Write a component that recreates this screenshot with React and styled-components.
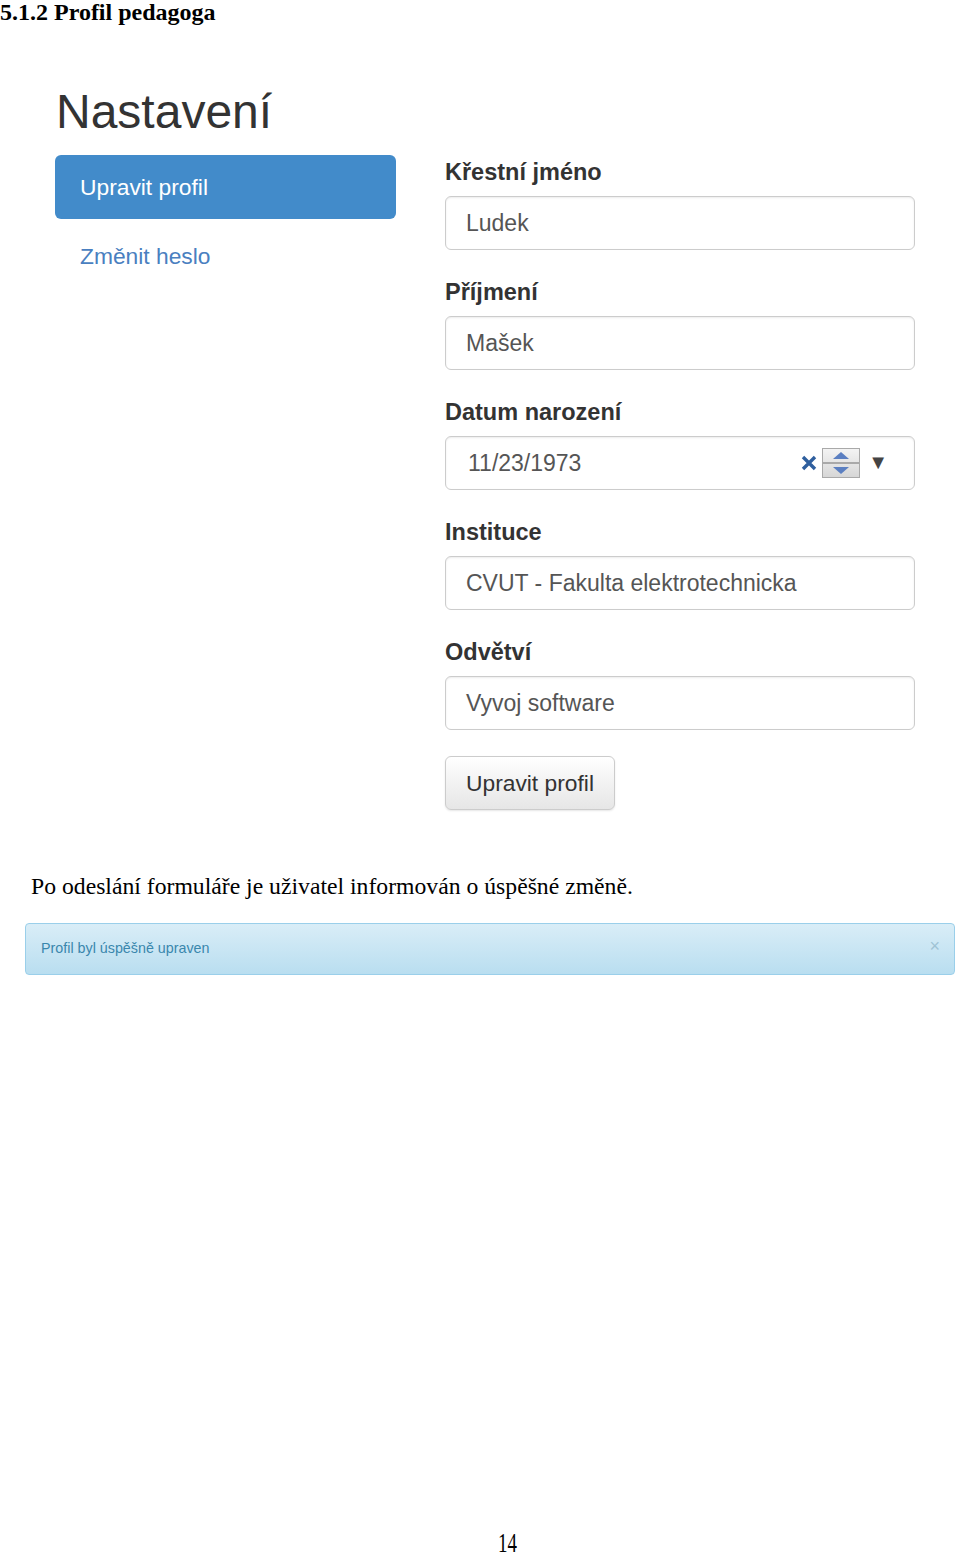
import React from "react";
import styled, { createGlobalStyle } from "styled-components";

const GlobalStyle = createGlobalStyle`
  html, body {
    margin: 0;
    padding: 0;
    background: #fff;
  }
  body {
    font-family: "Liberation Serif", "Times New Roman", serif;
  }
`;

const SpinnerIcon = () => (
  <svg width="38" height="30" viewBox="0 0 38 30">
    <defs>
      <linearGradient id="spin" x1="0" y1="0" x2="0" y2="1">
        <stop offset="0" stopColor="#f4f4f4" />
        <stop offset="1" stopColor="#d6d6d6" />
      </linearGradient>
    </defs>
    <rect x="0.5" y="0.5" width="37" height="29" fill="url(#spin)" stroke="#a9a9a9" />
    <line x1="1" y1="15" x2="37" y2="15" stroke="#a9a9a9" strokeWidth="2" />
    <path d="M11 11 L19 4 L27 11 Z" fill="#5b7fc1" />
    <path d="M11 19 L19 26 L27 19 Z" fill="#5b7fc1" />
  </svg>
);

const ClearIcon = () => (
  <svg width="16" height="16" viewBox="0 0 16 16">
    <path d="M2 2 L14 14 M14 2 L2 14" stroke="#2f5f9e" strokeWidth="3.4" strokeLinecap="butt" />
  </svg>
);

const fields = [
  { label: "Křestní jméno", value: "Ludek" },
  { label: "Příjmení", value: "Mašek" },
  { label: "Datum narození", value: "11/23/1973", date: true },
  { label: "Instituce", value: "CVUT - Fakulta elektrotechnicka" },
  { label: "Odvětví", value: "Vyvoj software" },
];

const App = () => {
  return (
    <>
      <GlobalStyle />
      <Page>
        <Heading>5.1.2 Profil pedagoga</Heading>

        <Settings>
          <Title>Nastavení</Title>
          <SettingsRow>
            <SideNav>
              <NavItem active>Upravit profil</NavItem>
              <NavItem>Změnit heslo</NavItem>
            </SideNav>

            <Form>
              {fields.map((f) => (
                <Group key={f.label}>
                  <Label>{f.label}</Label>
                  <Input>
                    <InputText date={f.date}>{f.value}</InputText>
                    {f.date && (
                      <DateTools>
                        <ClearIcon />
                        <SpinnerIcon />
                        <Caret>▼</Caret>
                      </DateTools>
                    )}
                  </Input>
                </Group>
              ))}
              <Button>Upravit profil</Button>
            </Form>
          </SettingsRow>
        </Settings>

        <Paragraph>Po odeslání formuláře je uživatel informován o úspěšné změně.</Paragraph>

        <Alert>
          <AlertText>Profil byl úspěšně upraven</AlertText>
          <AlertClose>×</AlertClose>
        </Alert>

        <PageNumber>14</PageNumber>
      </Page>
    </>
  );
};

export default App;

const Page = styled.div`
  width: 960px;
  height: 1558px;
  display: flex;
  flex-direction: column;
  overflow: hidden;
`;

const Heading = styled.div`
  font-family: "Liberation Serif", "Times New Roman", serif;
  font-weight: bold;
  font-size: 24px;
  line-height: 24px;
  color: #000;
  margin: 0;
  white-space: nowrap;
`;

const Settings = styled.div`
  display: flex;
  flex-direction: column;
  padding: 0 45px 0 55px;
  margin-top: 60px;
  font-family: "Liberation Sans", Arial, sans-serif;
`;

const Title = styled.div`
  font-size: 48px;
  line-height: 56px;
  color: #333;
  padding-left: 1px;
  margin-bottom: 15px;
`;

const SettingsRow = styled.div`
  display: flex;
  gap: 49px;
`;

const SideNav = styled.div`
  width: 341px;
  display: flex;
  flex-direction: column;
  gap: 5px;
`;

const NavItem = styled.div`
  height: 64px;
  display: flex;
  align-items: center;
  padding-left: 25px;
  border-radius: 6px;
  font-size: 22.8px;
  color: ${(p) => (p.active ? "#fff" : "#4a7fc0")};
  background: ${(p) => (p.active ? "#428bca" : "transparent")};
`;

const Form = styled.div`
  width: 470px;
  display: flex;
  flex-direction: column;
  padding-top: 1px;
`;

const Group = styled.div`
  display: flex;
  flex-direction: column;
  margin-bottom: 26px;
`;

const Label = styled.div`
  font-size: 23.5px;
  font-weight: bold;
  line-height: 32px;
  color: #333;
  margin-bottom: 8px;
`;

const Input = styled.div`
  height: 54px;
  box-sizing: border-box;
  border: 1px solid #ccc;
  border-radius: 6px;
  box-shadow: inset 0 1px 2px rgba(0, 0, 0, 0.08);
  display: flex;
  align-items: center;
  padding: 0 18px 0 20px;
`;

const InputText = styled.div`
  flex: 1;
  font-size: 23px;
  color: #555;
  padding-left: ${(p) => (p.date ? "2px" : "0")};
`;

const DateTools = styled.div`
  display: flex;
  align-items: center;
  gap: 5px;
  margin-right: 8px;
`;

const Caret = styled.span`
  font-size: 20px;
  line-height: 20px;
  color: #444;
  margin-left: 3px;
  margin-bottom: 3px;
`;

const Button = styled.div`
  align-self: flex-start;
  height: 54px;
  box-sizing: border-box;
  display: flex;
  align-items: center;
  padding: 0 20px;
  font-size: 22.8px;
  color: #333;
  border: 1px solid #ccc;
  border-radius: 6px;
  background: linear-gradient(#ffffff, #e6e6e6);
  box-shadow: 0 1px 2px rgba(0, 0, 0, 0.1);
`;

const Paragraph = styled.div`
  font-family: "Liberation Serif", "Times New Roman", serif;
  font-size: 23.7px;
  line-height: 26px;
  color: #000;
  margin: 63px 0 0 31px;
  white-space: nowrap;
`;

const Alert = styled.div`
  margin: 24px 5px 0 25px;
  height: 52px;
  box-sizing: border-box;
  border: 1px solid #9acfea;
  border-radius: 4px;
  background: linear-gradient(#d9edf7, #b9def0);
  display: flex;
  align-items: center;
  justify-content: space-between;
  padding: 0 14px 2px 15px;
`;

const AlertText = styled.span`
  font-family: "Liberation Sans", Arial, sans-serif;
  font-size: 14.3px;
  color: #3a87ad;
`;

const AlertClose = styled.span`
  font-family: "Liberation Sans", Arial, sans-serif;
  font-size: 18px;
  color: #9fc3d4;
  margin-bottom: 4px;
`;

const PageNumber = styled.div`
  margin-top: auto;
  margin-bottom: 1px;
  align-self: center;
  margin-left: 54px;
  font-family: "Liberation Serif", "Times New Roman", serif;
  font-size: 27px;
  line-height: 28px;
  color: #000;
  transform: scaleX(0.7);
`;
